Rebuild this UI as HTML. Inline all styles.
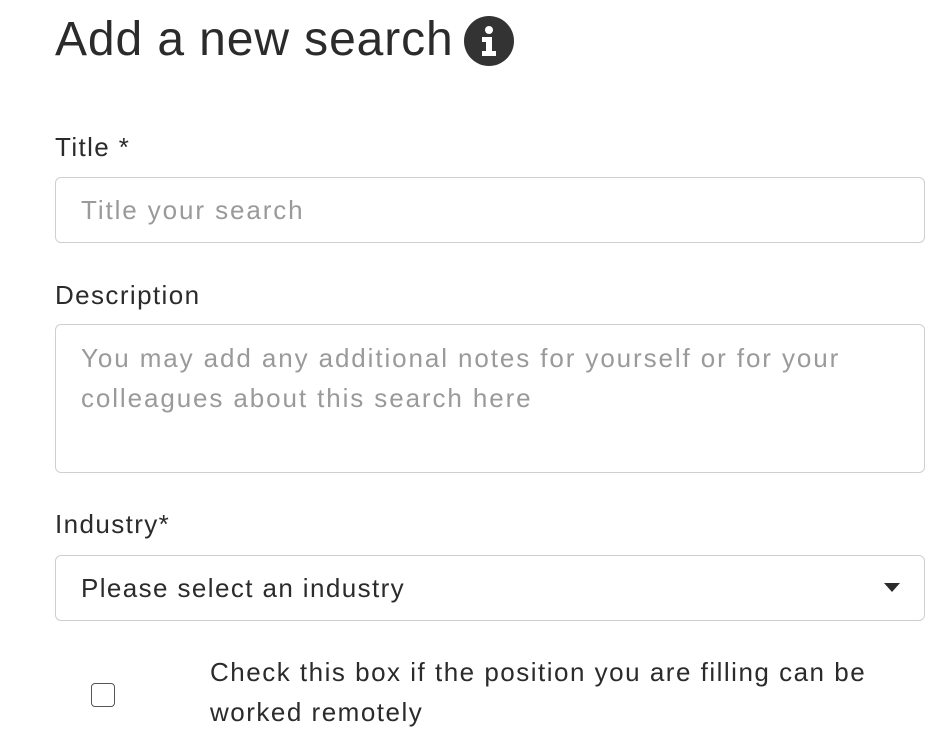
<!DOCTYPE html>
<html><head><style>
body{margin:0;width:950px;height:736px;background:#fff;font-family:"Liberation Sans",sans-serif;color:#2b2b2b;position:relative;overflow:hidden}
.a{position:absolute}
h1{position:absolute;left:55px;top:8px;margin:0;font-weight:normal;font-size:48px;line-height:64px;letter-spacing:0.9px;color:#2b2b2b}
.lbl{position:absolute;left:55px;font-size:26px;line-height:30px;letter-spacing:1.4px}
.box{position:absolute;left:55px;width:870px;border:1.5px solid #cfcfcf;border-radius:6px;box-sizing:border-box}
.ph{position:absolute;left:81px;font-size:26px;color:#9a9a9a;line-height:40px;letter-spacing:1.9px}
</style></head><body>
<h1>Add a new search</h1>
<svg class="a" style="left:463px;top:15px" width="52" height="52" viewBox="0 0 52 52"><circle cx="26" cy="26" r="25" fill="#333"/><circle cx="26" cy="15" r="4" fill="#fff"/><path d="M19 22h10v14h4v5H19v-5h4v-9h-4z" fill="#fff"/></svg>
<div class="lbl" style="top:132px">Title *</div>
<div class="box" style="top:177px;height:66px"></div>
<div class="ph" style="top:190px">Title your search</div>
<div class="lbl" style="top:280px">Description</div>
<div class="box" style="top:324px;height:149px"></div>
<div class="ph" style="top:338px">You may add any additional notes for yourself or for your<br>colleagues about this search here</div>
<div class="lbl" style="top:509px">Industry*</div>
<div class="box" style="top:555px;height:66px"></div>
<div class="ph" style="top:568px;color:#2b2b2b;letter-spacing:1.4px">Please select an industry</div>
<svg class="a" style="left:884px;top:583px" width="16" height="10"><path d="M0 0h16L8 9z" fill="#2b2b2b"/></svg>
<div class="a" style="left:91px;top:683px;width:24px;height:24px;border:1.5px solid #555;border-radius:4px;box-sizing:border-box"></div>
<div class="a" style="left:210px;top:652px;font-size:26px;line-height:40px;letter-spacing:1.5px">Check this box if the position you are filling can be<br>worked remotely</div>
</body></html>
